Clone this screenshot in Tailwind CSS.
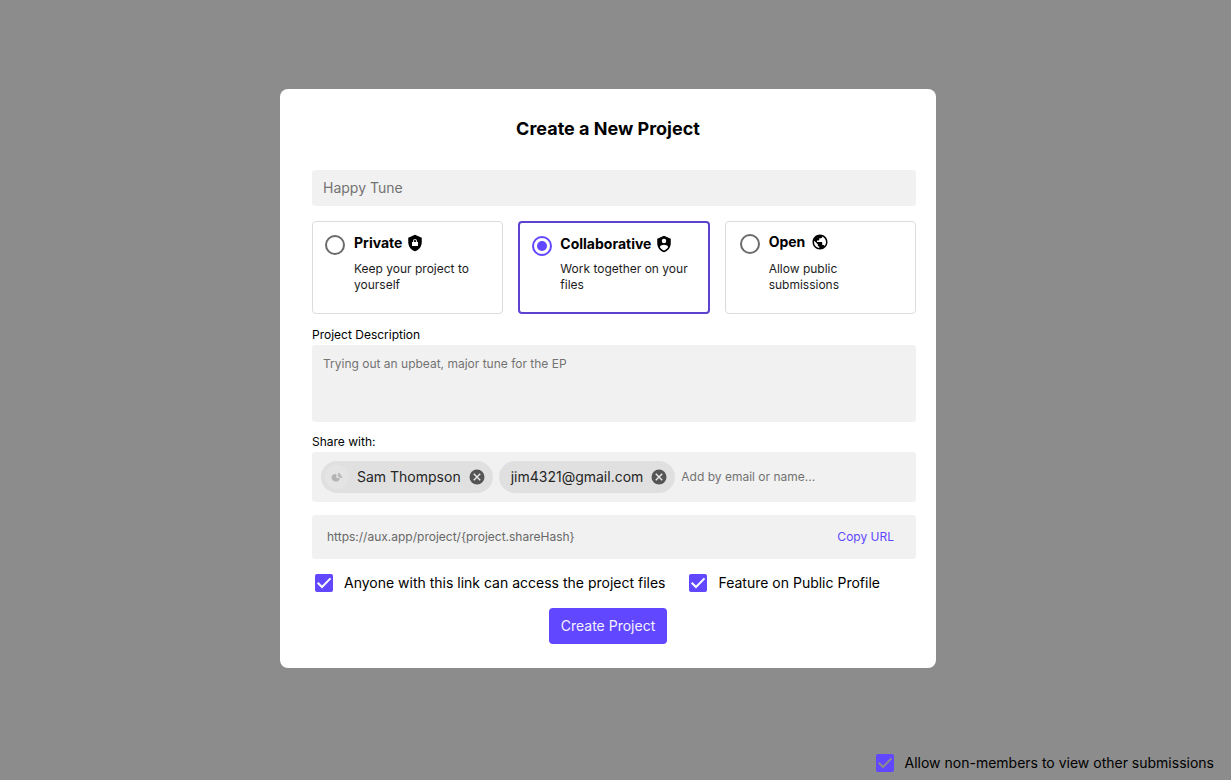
<!DOCTYPE html>
<html lang="en">
<head>
<meta charset="utf-8">
<meta name="viewport" content="width=device-width, initial-scale=1">
<title>Create a New Project</title>
<script src="https://cdn.jsdelivr.net/npm/@tailwindcss/browser@4"></script>
</head>
<body class="flex min-h-screen flex-col justify-between bg-[#8c8c8c] font-['Inter',sans-serif] text-sm text-black">
<main class="flex justify-center pt-[89px] pr-[15px]">
<form class="w-full max-w-[656px] rounded-lg bg-white pt-7 pr-5 pb-6 pl-8">
  <h1 class="mr-3 text-center text-lg leading-6 font-bold">Create a New Project</h1>
  <input type="text" aria-label="Project name" placeholder="Happy Tune" class="mt-[29px] block h-9 w-full rounded-[3px] bg-[#f1f1f1] px-[11px] pb-0.5 text-sm placeholder:text-[#737373]">

  <div role="radiogroup" aria-label="Visibility" class="mt-[15px] grid grid-cols-3 gap-[15px]">
    <label class="flex min-h-[93px] gap-[9px] rounded border border-[#dcdcdc] pt-[11px] pr-3 pl-3">
      <input type="radio" name="visibility" aria-label="Private" class="mt-0.5 size-5 shrink-0 appearance-none rounded-full border-2 border-[#6b6b6b]">
      <span>
        <span class="flex items-center gap-1 leading-5 font-bold">Private
          <svg class="size-[18px]" viewBox="0 0 24 24" fill="currentColor" aria-hidden="true"><path fill-rule="evenodd" d="M12 1 3 5v6c0 5.550 3.840 10.740 9 12 5.160-1.260 9-6.450 9-12V5zM12 6.500a2.500 2.500 0 0 0-2.500 2.500v1.500H8V16h8v-5.500h-1.500V9A2.500 2.500 0 0 0 12 6.500zm0 1.300c.7 0 1.200.5 1.200 1.200v1.500h-2.400V9c0-.7.5-1.200 1.200-1.200z"/></svg>
        </span>
        <span class="mt-2 block text-xs leading-4 text-[#1c1c1c]">Keep your project to yourself</span>
      </span>
    </label>
    <label class="flex min-h-[93px] gap-2 rounded border-2 border-[#5c42cf] pt-[11px] pr-3 pl-3">
      <input type="radio" name="visibility" aria-label="Collaborative" checked class="mt-0.5 size-5 shrink-0 appearance-none rounded-full border-2 border-[#6147ff] bg-[#6147ff] bg-clip-content p-[3px]">
      <span>
        <span class="flex items-center gap-1 leading-5 font-bold">Collaborative
          <svg class="size-[18px]" viewBox="0 0 24 24" fill="currentColor" aria-hidden="true"><path fill-rule="evenodd" d="M12 1 3 5v6c0 5.550 3.840 10.740 9 12 5.160-1.260 9-6.450 9-12V5zm0 4a3 3 0 1 1 0 6 3 3 0 0 1 0-6zm0 15.500c-2.300-.8-4.300-2.400-5.600-4.600.1-1.800 3.700-2.900 5.600-2.900s5.500 1.100 5.600 2.900c-1.300 2.200-3.300 3.800-5.600 4.600z"/></svg>
        </span>
        <span class="mt-[7px] block text-xs leading-4 text-[#1c1c1c]">Work together on your files</span>
      </span>
    </label>
    <label class="flex min-h-[93px] gap-[9px] rounded border border-[#dcdcdc] pt-[10px] pr-3 pl-3.5">
      <input type="radio" name="visibility" aria-label="Open" class="mt-0.5 size-5 shrink-0 appearance-none rounded-full border-2 border-[#6b6b6b]">
      <span>
        <span class="flex items-center gap-1.5 leading-5 font-bold">Open
          <svg class="size-[18px]" viewBox="0 0 24 24" fill="currentColor" aria-hidden="true"><path d="M12 2C6.480 2 2 6.480 2 12s4.480 10 10 10 10-4.480 10-10S17.520 2 12 2zm-1 17.930c-3.950-.49-7-3.850-7-7.930 0-.62.080-1.210.21-1.790L9 15v1c0 1.100.9 2 2 2v1.930zm6.900-2.540c-.26-.81-1-1.390-1.900-1.390h-1v-3c0-.55-.45-1-1-1H8v-2h2c.55 0 1-.45 1-1V7h2c1.100 0 2-.9 2-2v-.41c2.930 1.190 5 4.060 5 7.410 0 2.080-.8 3.970-2.100 5.390z"/></svg>
        </span>
        <span class="mt-[9px] block text-xs leading-4 text-[#1c1c1c]">Allow public submissions</span>
      </span>
    </label>
  </div>

  <label for="description" class="mt-[13px] block text-xs leading-4">Project Description</label>
  <textarea id="description" placeholder="Trying out an upbeat, major tune for the EP" class="mt-0.5 block h-[77px] w-full resize-none rounded-[3px] bg-[#f1f1f1] px-[11px] py-[11px] text-xs leading-4 placeholder:text-[#737373]"></textarea>

  <label for="share" class="mt-3 block text-xs leading-4">Share with:</label>
  <div class="mt-0.5 flex h-[50px] items-center gap-1.5 rounded-[3px] bg-[#f1f1f1] px-[9px]">
    <span class="flex h-8 items-center rounded-full bg-[#e0e0e0] pr-[7px] pl-1">
      <span class="grid size-6 place-items-center rounded-full bg-[#e4e4e4]">
        <svg class="size-3.5" viewBox="0 0 14 14" aria-hidden="true"><path fill="#b4b4b4" d="M6.500 4.200C4 3.600 1.500 5 1.500 7.600c0 2.300 1.900 4 4.200 4 2.300 0 4-1.500 4.200-3.400L6.200 7.800z"/><path fill="#b9b9b9" d="m8.300 2.500 2 1.500 2.500 4.200-2.600-.5L7.600 6.500z"/></svg>
      </span>
      <span class="mr-[7px] ml-2 text-[#252525]">Sam Thompson</span>
      <button type="button" aria-label="Remove Sam Thompson"><svg class="size-[18px]" viewBox="0 0 24 24" aria-hidden="true"><circle cx="12" cy="12" r="10" fill="#555"/><path d="m7.700 7.700 8.600 8.600m0-8.600-8.600 8.600" stroke="#e6e6e6" stroke-width="2"/></svg></button>
    </span>
    <span class="flex h-8 items-center rounded-full bg-[#e0e0e0] pr-[7px] pl-3">
      <span class="mr-[7px] text-[#252525]">jim4321@gmail.com</span>
      <button type="button" aria-label="Remove jim4321@gmail.com"><svg class="size-[18px]" viewBox="0 0 24 24" aria-hidden="true"><circle cx="12" cy="12" r="10" fill="#555"/><path d="m7.700 7.700 8.600 8.600m0-8.600-8.600 8.600" stroke="#e6e6e6" stroke-width="2"/></svg></button>
    </span>
    <input id="share" type="text" placeholder="Add by email or name..." class="min-w-0 flex-1 bg-transparent text-xs placeholder:text-[#737373]">
  </div>

  <div class="mt-[13px] flex h-11 items-center rounded-[3px] bg-[#f1f1f1] pr-[22px] pl-[15px]">
    <input type="text" readonly aria-label="Share link" value="https://aux.app/project/{project.shareHash}" class="min-w-0 flex-1 bg-transparent text-xs text-[#686868]">
    <button type="button" class="text-xs text-[#6147ff]">Copy URL</button>
  </div>

  <div class="mt-3.5 flex gap-6 pl-[3px] leading-5">
    <label class="flex items-center gap-[11px]">
      <span class="grid size-[18px]">
        <input type="checkbox" checked class="col-start-1 row-start-1 size-[18px] appearance-none rounded-xs bg-[#6147ff]">
        <svg class="pointer-events-none col-start-1 row-start-1 size-[18px]" viewBox="0 0 18 18" fill="none" stroke="#fff" stroke-width="2" aria-hidden="true"><path d="m2.700 8.700 4.300 4.300 8.500-8.600"/></svg>
      </span>
      Anyone with this link can access the project files
    </label>
    <label class="flex items-center gap-[11px]">
      <span class="grid size-[18px]">
        <input type="checkbox" checked class="col-start-1 row-start-1 size-[18px] appearance-none rounded-xs bg-[#6147ff]">
        <svg class="pointer-events-none col-start-1 row-start-1 size-[18px]" viewBox="0 0 18 18" fill="none" stroke="#fff" stroke-width="2" aria-hidden="true"><path d="m2.700 8.700 4.300 4.300 8.500-8.600"/></svg>
      </span>
      Feature on Public Profile
    </label>
  </div>

  <div class="mt-[15px] mr-3 flex justify-center">
    <button type="submit" class="h-9 rounded bg-[#6147ff] px-3 text-[#f3f1ff]">Create Project</button>
  </div>
</form>
</main>
<footer class="flex justify-end pr-[17px] pb-[7px] leading-5">
  <label class="flex items-center gap-[11px]">
    <span class="grid size-[18px]">
      <input type="checkbox" checked class="col-start-1 row-start-1 size-[18px] appearance-none rounded-xs bg-[#6147ff]">
      <svg class="pointer-events-none col-start-1 row-start-1 size-[18px]" viewBox="0 0 18 18" fill="none" stroke="#8c8c8c" stroke-width="2" aria-hidden="true"><path d="m2.700 8.700 4.300 4.300 8.500-8.600"/></svg>
    </span>
    Allow non-members to view other submissions
  </label>
</footer>
</body>
</html>
